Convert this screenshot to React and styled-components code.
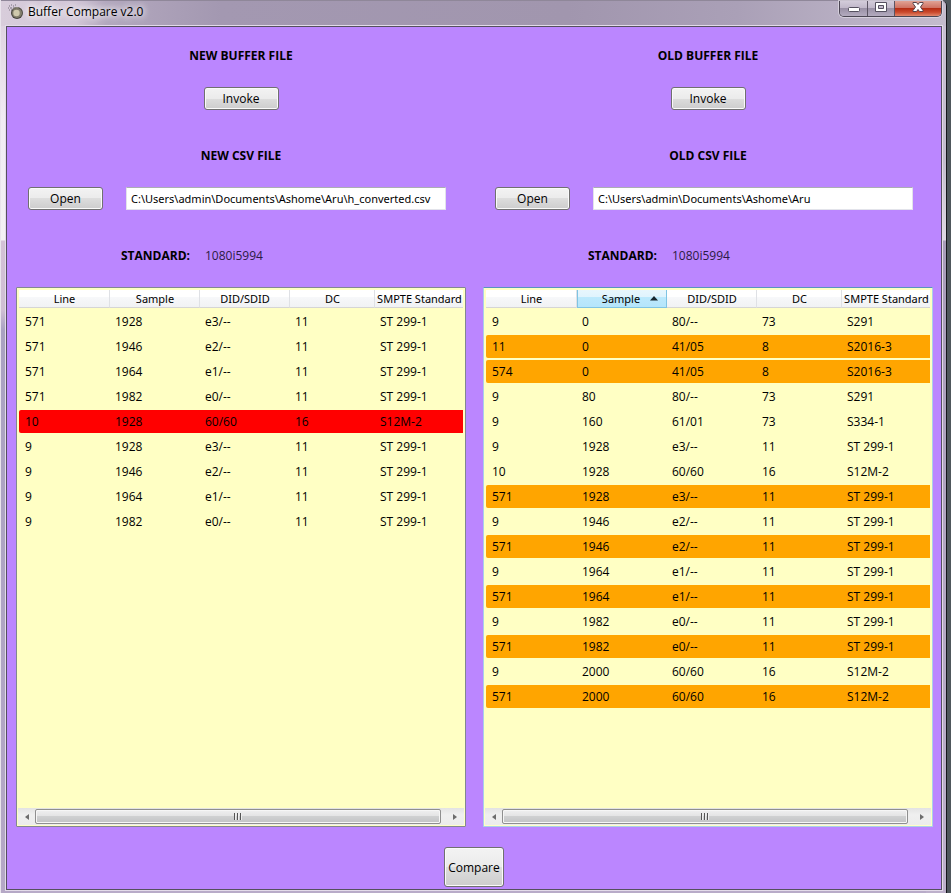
import React from "react";
import styled, { createGlobalStyle, css } from "styled-components";

const Global = createGlobalStyle`
  *, *::before, *::after { box-sizing: border-box; }
  body { margin: 0; background: #35383f; }
  body, button, input { font-family: "Open Sans", "Noto Sans", sans-serif; font-size: 12px; color: #000; }
`;

const Desktop = styled.div`
  min-height: 100vh;
  display: flex;
  padding: 0 4px 0 1px;
  background: linear-gradient(90deg, #e9e4ec 1px, transparent 1px), linear-gradient(90deg, #4f575c, #4f575c);
`;

const Frame = styled.div`
  flex: 1;
  min-width: 0;
  display: flex;
  flex-direction: column;
  padding: 0 4px 3px 5px;
  border-right: 1px solid #15161a;
  border-radius: 0 6px 0 0;
  background:
    linear-gradient(180deg, #d9cddb 0, #f1ecf3 120px, #f3f1f4 240px, #d3c1d6 241px, #cfbfd4 310px, #aaa2c2 330px, #b5a8c6 100%) left / 20px 100% no-repeat,
    linear-gradient(180deg, #c9c0d2 0, #c3bccd 160px, #ded8e2 240px, #a89cb9 241px, #bdb0cb 100%) right / 20px 100% no-repeat,
    #b8abc8;
`;

const TitleBar = styled.header`
  height: 26px;
  margin: 0 -4px 0 -5px;
  padding: 0 4px 0 7px;
  display: flex;
  align-items: flex-start;
  gap: 4px;
  border-radius: 0 6px 0 0;
  background: linear-gradient(90deg, #d8cddb 0, #d2c6d7 75px, #b3a8be 105px, #a398b1 220px, #a196ae 60%, #aaa0b7 78%, #c4bccd 100%);
  border-top: 1px solid #8f8799;
`;

const Title = styled.h1`
  flex: 1;
  margin: 0;
  font-size: 12px;
  line-height: 22px;
  font-weight: 400;
  text-shadow: 0 0 6px #fff, 0 0 8px #fff, 0 0 10px #ffffffaa;
`;

const AppIcon = styled.svg`
  display: block;
  width: 16px;
  height: 16px;
  margin-top: 3px;
`;

const WindowButtons = styled.div`
  display: flex;
  height: 16px;
  border: 1px solid #4b4653;
  border-top: 0;
  border-radius: 0 0 5px 5px;
  box-shadow: 0 0 0 1px #e4dfe9aa;
  overflow: hidden;
`;

const WindowButton = styled.button`
  width: ${(p) => (p.$close ? 47 : 27)}px;
  height: 15px;
  padding: 0;
  border: 0;
  display: flex;
  justify-content: center;
  align-items: flex-start;
  background: ${(p) =>
    p.$close
      ? "linear-gradient(180deg, #e0a294 0, #cf7263 45%, #b52d14 50%, #cb4a2d 75%, #e2866b 100%)"
      : "linear-gradient(180deg, #d3ccda 0, #c1b8ca 45%, #9a91a6 50%, #b4abbf 100%)"};
  & + & { border-left: 1px solid #5b5463; }
  svg { display: block; }
`;

const Client = styled.main`
  flex: 1;
  display: flex;
  flex-direction: column;
  border: 1px solid #55505f;
  outline: 1px solid #e3dbe9;
  background: #bb86ff;
`;

const Columns = styled.div`
  flex: 1;
  display: grid;
  grid-template-columns: minmax(0, 1fr) minmax(0, 1fr);
  gap: 17px;
  padding: 19px 8px 0 9px;
`;

const Column = styled.section`
  display: flex;
  flex-direction: column;
`;

const Heading = styled.h2`
  margin: 0;
  font-size: 12px;
  line-height: 20px;
  font-weight: 700;
  text-align: center;
`;

const Button = styled.button`
  flex: none;
  width: ${(p) => (p.$large ? 60 : 75)}px;
  height: ${(p) => (p.$large ? 40 : 23)}px;
  padding: 0;
  border: 1px solid #707070;
  border-radius: 3px;
  box-shadow: inset 0 0 0 1px #fafafa;
  background: linear-gradient(180deg, #f3f3f3 0, #ebebeb 50%, #dddddd 50%, #cdcdcd 100%);
  line-height: 19px;
`;

const InvokeRow = styled.div`
  display: flex;
  justify-content: center;
  padding: 21px 0 36px;
`;

const FileRow = styled.div`
  display: flex;
  gap: 23px;
  padding: 21px 20px 0 12px;
`;

const PathInput = styled.input`
  flex: 1;
  min-width: 0;
  height: 23px;
  padding: 0 4px;
  border: 1px solid #e2e3ea;
  border-top-color: #abadb3;
  border-radius: 1px;
  background: #fff;
  font-family: "Noto Sans", sans-serif;
  font-size: 11px;
  outline: 0;
`;

const Standard = styled.dl`
  display: flex;
  gap: 15px;
  margin: 0;
  padding: 36px 0 21px 105px;
  line-height: 20px;
  dt { font-weight: 700; }
  dd { margin: 0; color: #2b1a45; }
`;

const ListView = styled.div`
  flex: 1;
  display: flex;
  flex-direction: column;
  justify-content: space-between;
  min-height: 300px;
  padding: 0 1px 1px;
  border: 1px solid ${(p) => (p.$focused ? "#a9cfe8" : "#828790")};
  border-top-color: ${(p) => (p.$focused ? "#5794bf" : "#828790")};
  border-radius: 1px;
  background: #ffffc4;
`;

const Table = styled.table`
  width: 100%;
  padding: 0 1px;
  table-layout: fixed;
  border-collapse: separate;
  border-spacing: 0 2px;
`;

const HeaderCell = styled.th`
  height: 18px;
  padding: 0;
  font-weight: 400;
  line-height: 17px;
  white-space: nowrap;
  background: linear-gradient(180deg, #fff 0, #fff 40%, #f7f8fa 41%, #f1f2f4 100%);
  border-right: 1px solid #dfe1e5;
  border-bottom: 1px solid #d5d5d5;
  &:last-child { border-right: 0; }
  ${(p) =>
    p.$sorted &&
    css`
      border: 1px solid #7fc4e3;
      border-width: 0 1px 1px;
      background: linear-gradient(180deg, #e7f6fd 0, #e0f4fd 40%, #bce9fc 41%, #b5e5fb 100%);
    `}
`;

const SortButton = styled.button`
  width: 100%;
  padding: 0 0 0 1px;
  border: 0;
  background: none;
  display: flex;
  justify-content: safe center;
  align-items: center;
  gap: 10px;
  font-family: "Noto Sans", sans-serif;
  font-size: 11px;
  line-height: 17px;
  &:has(svg) { padding-left: 16px; }
`;

const Row = styled.tr`
  background: ${(p) => ({ missing: "#ff0000", changed: "#ffa500" }[p.$state] || "transparent")};
  td:first-child { border-radius: 2px 0 0 2px; }
`;

const Cell = styled.td`
  height: 23px;
  padding: 0 5px;
  line-height: 23px;
  white-space: nowrap;
  &:first-child { padding-left: 6px; }
`;

const ScrollBar = styled.div`
  display: flex;
  height: 17px;
  padding: 1px 0;
  background: linear-gradient(180deg, #e3e3e3, #efefef 40%, #ececec);
`;

const ScrollArrow = styled.button`
  width: ${(p) => (p.$end ? 23 : 17)}px;
  padding: 0 0 0 ${(p) => (p.$end ? 4 : 0)}px;
  border: 0;
  background: none;
  display: flex;
  align-items: center;
  justify-content: center;
`;

const Thumb = styled.div`
  flex: 1;
  display: flex;
  align-items: center;
  justify-content: center;
  border: 1px solid #8f8f8f;
  border-radius: 2px;
  box-shadow: inset 0 0 0 1px #f6f6f6;
  background: linear-gradient(180deg, #f0f0f0 0, #e3e3e4 48%, #cfd0d1 50%, #c2c3c5 100%);
`;

const Footer = styled.footer`
  display: flex;
  justify-content: center;
  padding: 20px 0 2px;
`;

const COLUMNS = ["Line", "Sample", "DID/SDID", "DC", "SMPTE Standard"];

const NEW_ROWS = [
  ["571", "1928", "e3/--", "11", "ST 299-1"],
  ["571", "1946", "e2/--", "11", "ST 299-1"],
  ["571", "1964", "e1/--", "11", "ST 299-1"],
  ["571", "1982", "e0/--", "11", "ST 299-1"],
  ["10", "1928", "60/60", "16", "S12M-2", "missing"],
  ["9", "1928", "e3/--", "11", "ST 299-1"],
  ["9", "1946", "e2/--", "11", "ST 299-1"],
  ["9", "1964", "e1/--", "11", "ST 299-1"],
  ["9", "1982", "e0/--", "11", "ST 299-1"],
];

const OLD_ROWS = [
  ["9", "0", "80/--", "73", "S291"],
  ["11", "0", "41/05", "8", "S2016-3", "changed"],
  ["574", "0", "41/05", "8", "S2016-3", "changed"],
  ["9", "80", "80/--", "73", "S291"],
  ["9", "160", "61/01", "73", "S334-1"],
  ["9", "1928", "e3/--", "11", "ST 299-1"],
  ["10", "1928", "60/60", "16", "S12M-2"],
  ["571", "1928", "e3/--", "11", "ST 299-1", "changed"],
  ["9", "1946", "e2/--", "11", "ST 299-1"],
  ["571", "1946", "e2/--", "11", "ST 299-1", "changed"],
  ["9", "1964", "e1/--", "11", "ST 299-1"],
  ["571", "1964", "e1/--", "11", "ST 299-1", "changed"],
  ["9", "1982", "e0/--", "11", "ST 299-1"],
  ["571", "1982", "e0/--", "11", "ST 299-1", "changed"],
  ["9", "2000", "60/60", "16", "S12M-2"],
  ["571", "2000", "60/60", "16", "S12M-2", "changed"],
];

const Arrow = ({ d }) => (
  <svg width="6" height="8" viewBox="0 0 6 8" aria-hidden="true">
    <path d={d} fill="#6d6d6d" />
  </svg>
);

function BufferList({ rows, sorted, label }) {
  return (
    <ListView $focused={Boolean(sorted)}>
      <Table aria-label={label}>
        <colgroup>
          <col width="91" />
          <col width="90" />
          <col width="90" />
          <col width="85" />
          <col />
        </colgroup>
        <thead>
          <tr>
            {COLUMNS.map((name) => (
              <HeaderCell key={name} $sorted={name === sorted} aria-sort={name === sorted ? "ascending" : undefined}>
                <SortButton type="button">
                  {name}
                  {name === sorted && (
                    <svg width="8" height="5" viewBox="0 0 8 5" aria-hidden="true">
                      <path d="M0 4.5 4 0l4 4.5z" fill="#17262e" />
                    </svg>
                  )}
                </SortButton>
              </HeaderCell>
            ))}
          </tr>
        </thead>
        <tbody>
          {rows.map(([line, sample, did, dc, standard, state], i) => (
            <Row key={i} $state={state}>
              <Cell>{line}</Cell>
              <Cell>{sample}</Cell>
              <Cell>{did}</Cell>
              <Cell>{dc}</Cell>
              <Cell>{standard}</Cell>
            </Row>
          ))}
        </tbody>
      </Table>
      <ScrollBar>
        <ScrollArrow type="button" aria-label="Scroll left"><Arrow d="M5 1v6L1 4z" /></ScrollArrow>
        <Thumb>
          <svg width="8" height="7" viewBox="0 0 8 7" aria-hidden="true">
            <path d="M0 0h1v7H0zM3 0h1v7H3zM6 0h1v7H6z" fill="#555" />
            <path d="M1 0h1v7H1zM4 0h1v7H4zM7 0h1v7H7z" fill="#eee" />
          </svg>
        </Thumb>
        <ScrollArrow type="button" $end aria-label="Scroll right"><Arrow d="M1 1v6l4-3z" /></ScrollArrow>
      </ScrollBar>
    </ListView>
  );
}

function BufferColumn({ age, path, rows, sorted }) {
  return (
    <Column>
      <Heading>{age} BUFFER FILE</Heading>
      <InvokeRow><Button type="button">Invoke</Button></InvokeRow>
      <Heading as="label" htmlFor={`${age}-path`}>{age} CSV FILE</Heading>
      <FileRow>
        <Button type="button">Open</Button>
        <PathInput id={`${age}-path`} type="text" defaultValue={path} spellCheck={false} />
      </FileRow>
      <Standard><dt>STANDARD:</dt><dd>1080i5994</dd></Standard>
      <BufferList rows={rows} sorted={sorted} label={`${age} buffer packets`} />
    </Column>
  );
}

export default function App() {
  return (
    <>
      <Global />
      <Desktop>
        <Frame>
          <TitleBar>
            <AppIcon viewBox="0 0 16 16" aria-hidden="true">
              <path d="M1 2h1M3 1h1M2 4h2M5 2h1M1 6h1M3 6h1M5 4h1M0 4h1M7 1h1" stroke="#77717c" strokeWidth="1" />
              <circle cx="9" cy="9" r="6" fill="#45423c" />
              <circle cx="9" cy="9" r="5" fill="#827d6b" />
              <circle cx="8.5" cy="9" r="3.2" fill="#cfc8ac" />
              <path d="M4.5 5.500a6 6 0 0 1 6-2" stroke="#8d897c" fill="none" />
            </AppIcon>
            <Title>Buffer Compare v2.0</Title>
            <WindowButtons>
              <WindowButton type="button" aria-label="Minimize">
                <svg width="14" height="14" viewBox="0 0 14 14"><rect x="1.500" y="6.500" width="11" height="4" rx="1" fill="#fff" stroke="#55505f" /></svg>
              </WindowButton>
              <WindowButton type="button" aria-label="Maximize">
                <svg width="14" height="14" viewBox="0 0 14 14">
                  <path fillRule="evenodd" d="M1.500 1.500h11v9h-11zM4.500 4.500h5v3h-5z" fill="#fff" stroke="#55505f" />
                </svg>
              </WindowButton>
              <WindowButton type="button" $close aria-label="Close">
                <svg width="14" height="14" viewBox="0 0 14 14">
                  <path d="M2 1.500h3.500L7 3.500l1.500-2H12v1L9.500 6l2.500 3.500v1H8.500L7 8.500l-1.500 2H2v-1L4.500 6 2 2.500z" fill="#fff" stroke="#55424a" />
                </svg>
              </WindowButton>
            </WindowButtons>
          </TitleBar>
          <Client>
            <Columns>
              <BufferColumn age="NEW" path={"C:\\Users\\admin\\Documents\\Ashome\\Aru\\h_converted.csv"} rows={NEW_ROWS} />
              <BufferColumn age="OLD" path={"C:\\Users\\admin\\Documents\\Ashome\\Aru"} rows={OLD_ROWS} sorted="Sample" />
            </Columns>
            <Footer><Button type="button" $large>Compare</Button></Footer>
          </Client>
        </Frame>
      </Desktop>
    </>
  );
}
